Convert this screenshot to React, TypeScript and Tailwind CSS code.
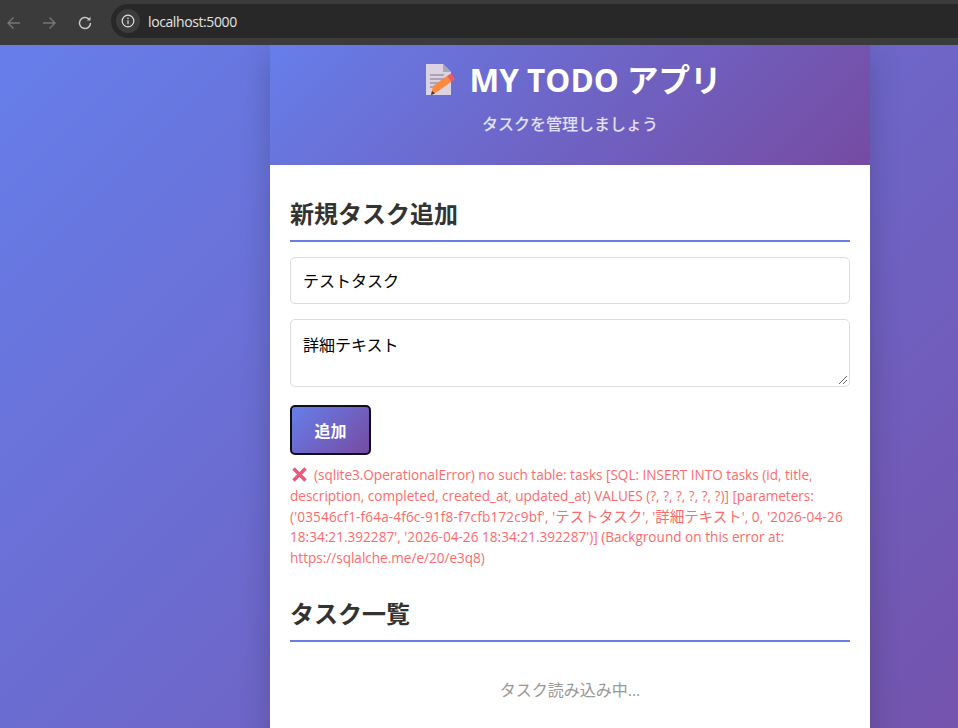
import React from "react";

function Memo() {
  return (
    <svg width="28" height="32" viewBox="0 0 28 32" className="shrink-0 overflow-visible">
      <path d="M0 0H17L25 8V31H0Z" fill="#dcd3e2" />
      <path d="M17 0L25 8H17Z" fill="#aca3b4" />
      <path d="M4 11H18M4 15H18M4 19H14M4 23H9" stroke="#9d94a6" strokeWidth="1.5" />
      <path d="M5 31L7 22L21 12L25 18L11 28Z" fill="#f98a3e" />
      <path d="M21 12L25 9.6L29 15.4L25 18Z" fill="#ee5f5c" />
      <path d="M6 27L5 31L9 29.6Z" fill="#3b3340" />
    </svg>
  );
}

function Cross() {
  return (
    <svg width="15" height="15" viewBox="0 0 15 15" className="inline-block align-[-2px] mr-[7px] ml-[2px]">
      <path d="M1.5 1.5L13.5 13.5M13.5 1.5L1.5 13.5" stroke="#f0557f" strokeWidth="3.5" />
    </svg>
  );
}

function Ja({ children }: { children: React.ReactNode }) {
  return <span className="text-[14.5px]">{children}</span>;
}

export default function App() {
  return (
    <div className="w-[958px] h-[728px] overflow-hidden flex flex-col font-['Open_Sans','Noto_Sans_CJK_JP',sans-serif]">
      <div className="h-[45px] shrink-0 bg-[#3b3b3b] flex items-center relative">
        <div className="flex items-center pl-[6px] gap-[19px]">
          <svg width="16" height="16" viewBox="0 0 16 16" fill="none" stroke="#777" strokeWidth="1.4"><path d="M14 8H2M7.5 2.5L2 8l5.5 5.5" /></svg>
          <svg width="16" height="16" viewBox="0 0 16 16" fill="none" stroke="#777" strokeWidth="1.4"><path d="M2 8h12M8.5 2.5L14 8l-5.5 5.5" /></svg>
          <svg width="16" height="16" viewBox="0 0 16 16" fill="none" stroke="#c8c8c8" strokeWidth="1.5" className="ml-[1px]"><path d="M13.5 8A5.5 5.5 0 1 1 11.7 3.9" /><path d="M13.5 1.8V5.5H9.8Z" fill="#c8c8c8" stroke="none" /></svg>
        </div>
        <div className="ml-[18px] flex-1 h-[34px] mt-[-3px] rounded-l-full bg-[#282828] flex items-center pl-[5px]">
          <div className="w-[24px] h-[24px] rounded-full bg-[#3c3c3c] flex items-center justify-center">
            <svg width="14" height="14" viewBox="0 0 14 14" fill="none" stroke="#dedede" strokeWidth="1.2"><circle cx="7" cy="7" r="5.8" /><path d="M7 6.2V10.2M7 3.6V5" /></svg>
          </div>
          <span className="ml-[8px] text-[14px] text-[#e3e3e3] tracking-[-0.4px]">localhost:5000</span>
        </div>
      </div>
      <div className="flex-1 min-h-0 overflow-hidden pl-[270px] bg-[linear-gradient(135deg,#667eea_0%,#764ba2_100%)] bg-[length:1140px_800px]">
        <div className="w-[600px] bg-white shadow-[0_10px_30px_rgba(0,0,0,0.2)] h-[800px]">
          <div className="h-[120px] bg-[linear-gradient(135deg,#667eea_0%,#764ba2_100%)] flex flex-col items-center text-white pt-[16px]">
            <div className="flex items-center gap-[16px] h-[38px] pl-[7px]">
              <Memo />
              <h1 className="text-[31.5px] font-bold leading-none">MY TODO アプリ</h1>
            </div>
            <p className="mt-[14px] text-[16px] leading-[22px] text-white/80 font-medium">タスクを管理しましょう</p>
          </div>
          <div className="px-[20px] pt-[31px]">
            <h2 className="text-[24px] font-bold text-[#333] leading-[36px] h-[46px] border-b-2 border-[#667eea]">新規タスク追加</h2>
            <div className="mt-[15px] h-[47px] w-[560px] rounded-[5px] border border-[#dddddd] flex items-center pl-[12px] pt-[1px] text-[16px] text-black">テストタスク</div>
            <div className="mt-[15px] h-[68px] w-[560px] rounded-[5px] border border-[#dddddd] pl-[12px] pt-[13px] text-[16px] leading-[24px] text-black relative">
              詳細テキスト
              <svg width="10" height="10" viewBox="0 0 10 10" className="absolute right-[1px] bottom-[1px]" stroke="#666" strokeWidth="1"><path d="M1 9L9 1M5 9L9 5" /></svg>
            </div>
            <button className="mt-[18px] block w-[81px] h-[50px] rounded-[5px] border-2 border-[#101018] bg-[linear-gradient(135deg,#667eea_0%,#764ba2_100%)] text-white text-[16px] font-bold pt-[1px]">追加</button>
            <p className="mt-[10px] text-[13.55px] leading-[20.8px] text-[#ff6b6b] w-[560px]">
              <Cross />(sqlite3.OperationalError) no such table: tasks [SQL: INSERT INTO tasks (id, title, description, completed, created_at, updated_at) VALUES (?, ?, ?, ?, ?, ?)] [parameters: <span className="tracking-[0.16px]">('03546cf1-f64a-4f6c-91f8-f7cfb172c9bf',</span> '<Ja>テストタスク</Ja>', '<Ja>詳細テキスト</Ja>', <span className="tracking-[0.2px]">0, '2026-04-26</span> <span className="tracking-[0.04px]">18:34:21.392287', '2026-04-26 18:34:21.392287')] (Background on this error at:</span> https://sqlalche.me/e/20/e3q8)
            </p>
            <h2 className="mt-[27px] text-[24px] font-bold text-[#333] leading-[36px] h-[46px] border-b-2 border-[#667eea]">タスク一覧</h2>
            <p className="mt-[36px] text-center text-[16px] leading-[24px] text-[#999]">タスク読み込み中...</p>
          </div>
        </div>
      </div>
    </div>
  );
}
